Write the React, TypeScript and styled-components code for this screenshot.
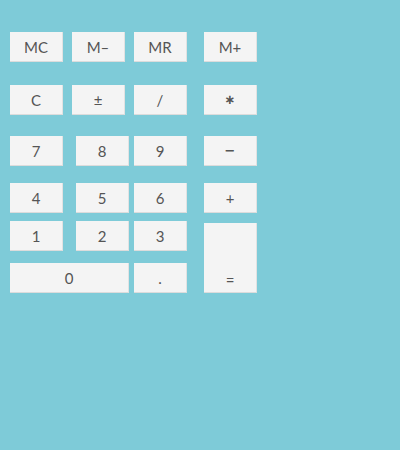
import styled, { createGlobalStyle } from "styled-components"

const Global = createGlobalStyle`
  html, body {
    margin: 0;
    padding: 0;
    background: #7ecbd8;
  }
  body {
    width: 400px;
    height: 450px;
    font-family: Lato, "Open Sans", sans-serif;
  }
`

const Pad = styled.div`
  padding: 32px 0 0 10px;
`

const Row = styled.div<{ $gap: number }>`
  display: flex;
  margin-bottom: ${(p) => p.$gap}px;
`

const Key = styled.button<{ $left?: number; $wide?: boolean; $tall?: boolean }>`
  box-sizing: border-box;
  width: ${(p) => (p.$wide ? 119 : 53)}px;
  height: ${(p) => (p.$tall ? 70 : 30)}px;
  margin: 0 0 0 ${(p) => p.$left ?? 0}px;
  padding: ${(p) => (p.$tall ? "0 0 2px" : "0")};
  display: flex;
  align-items: ${(p) => (p.$tall ? "flex-end" : "center")};
  justify-content: center;
  background: #f4f4f4;
  border: none;
  border-right: 1px solid #e2e2e2;
  border-bottom: 1px solid #dcdcdc;
  color: #555;
  font-family: Lato, "Open Sans", sans-serif;
  font-size: 15px;
  line-height: 20px;
  cursor: pointer;
`

const Sign = styled.span`
  font-family: "DejaVu Sans", sans-serif;
  font-size: 13px;
  font-weight: bold;
`

const Bottom = styled.div`
  display: flex;
  align-items: flex-start;
`

const Stack = styled.div`
  display: flex;
  flex-direction: column;
`

export default function App() {
  return (
    <>
      <Global />
      <Pad>
        <Row $gap={23}>
          <Key>MC</Key>
          <Key $left={9}>M–</Key>
          <Key $left={9}>MR</Key>
          <Key $left={17}>M+</Key>
        </Row>
        <Row $gap={21}>
          <Key>C</Key>
          <Key $left={9}>±</Key>
          <Key $left={9}>/</Key>
          <Key $left={17}>
            <Sign>∗</Sign>
          </Key>
        </Row>
        <Row $gap={17}>
          <Key>7</Key>
          <Key $left={13}>8</Key>
          <Key $left={5}>9</Key>
          <Key $left={17}>
            <Sign>−</Sign>
          </Key>
        </Row>
        <Row $gap={8}>
          <Key>4</Key>
          <Key $left={13}>5</Key>
          <Key $left={5}>6</Key>
          <Key $left={17}>+</Key>
        </Row>
        <Bottom>
          <Stack>
            <Row $gap={12}>
              <Key>1</Key>
              <Key $left={13}>2</Key>
              <Key $left={5}>3</Key>
            </Row>
            <Row $gap={0}>
              <Key $wide>0</Key>
              <Key $left={5}>.</Key>
            </Row>
          </Stack>
          <Key $tall $left={17} style={{ marginTop: 2 }}>
            =
          </Key>
        </Bottom>
      </Pad>
    </>
  )
}
